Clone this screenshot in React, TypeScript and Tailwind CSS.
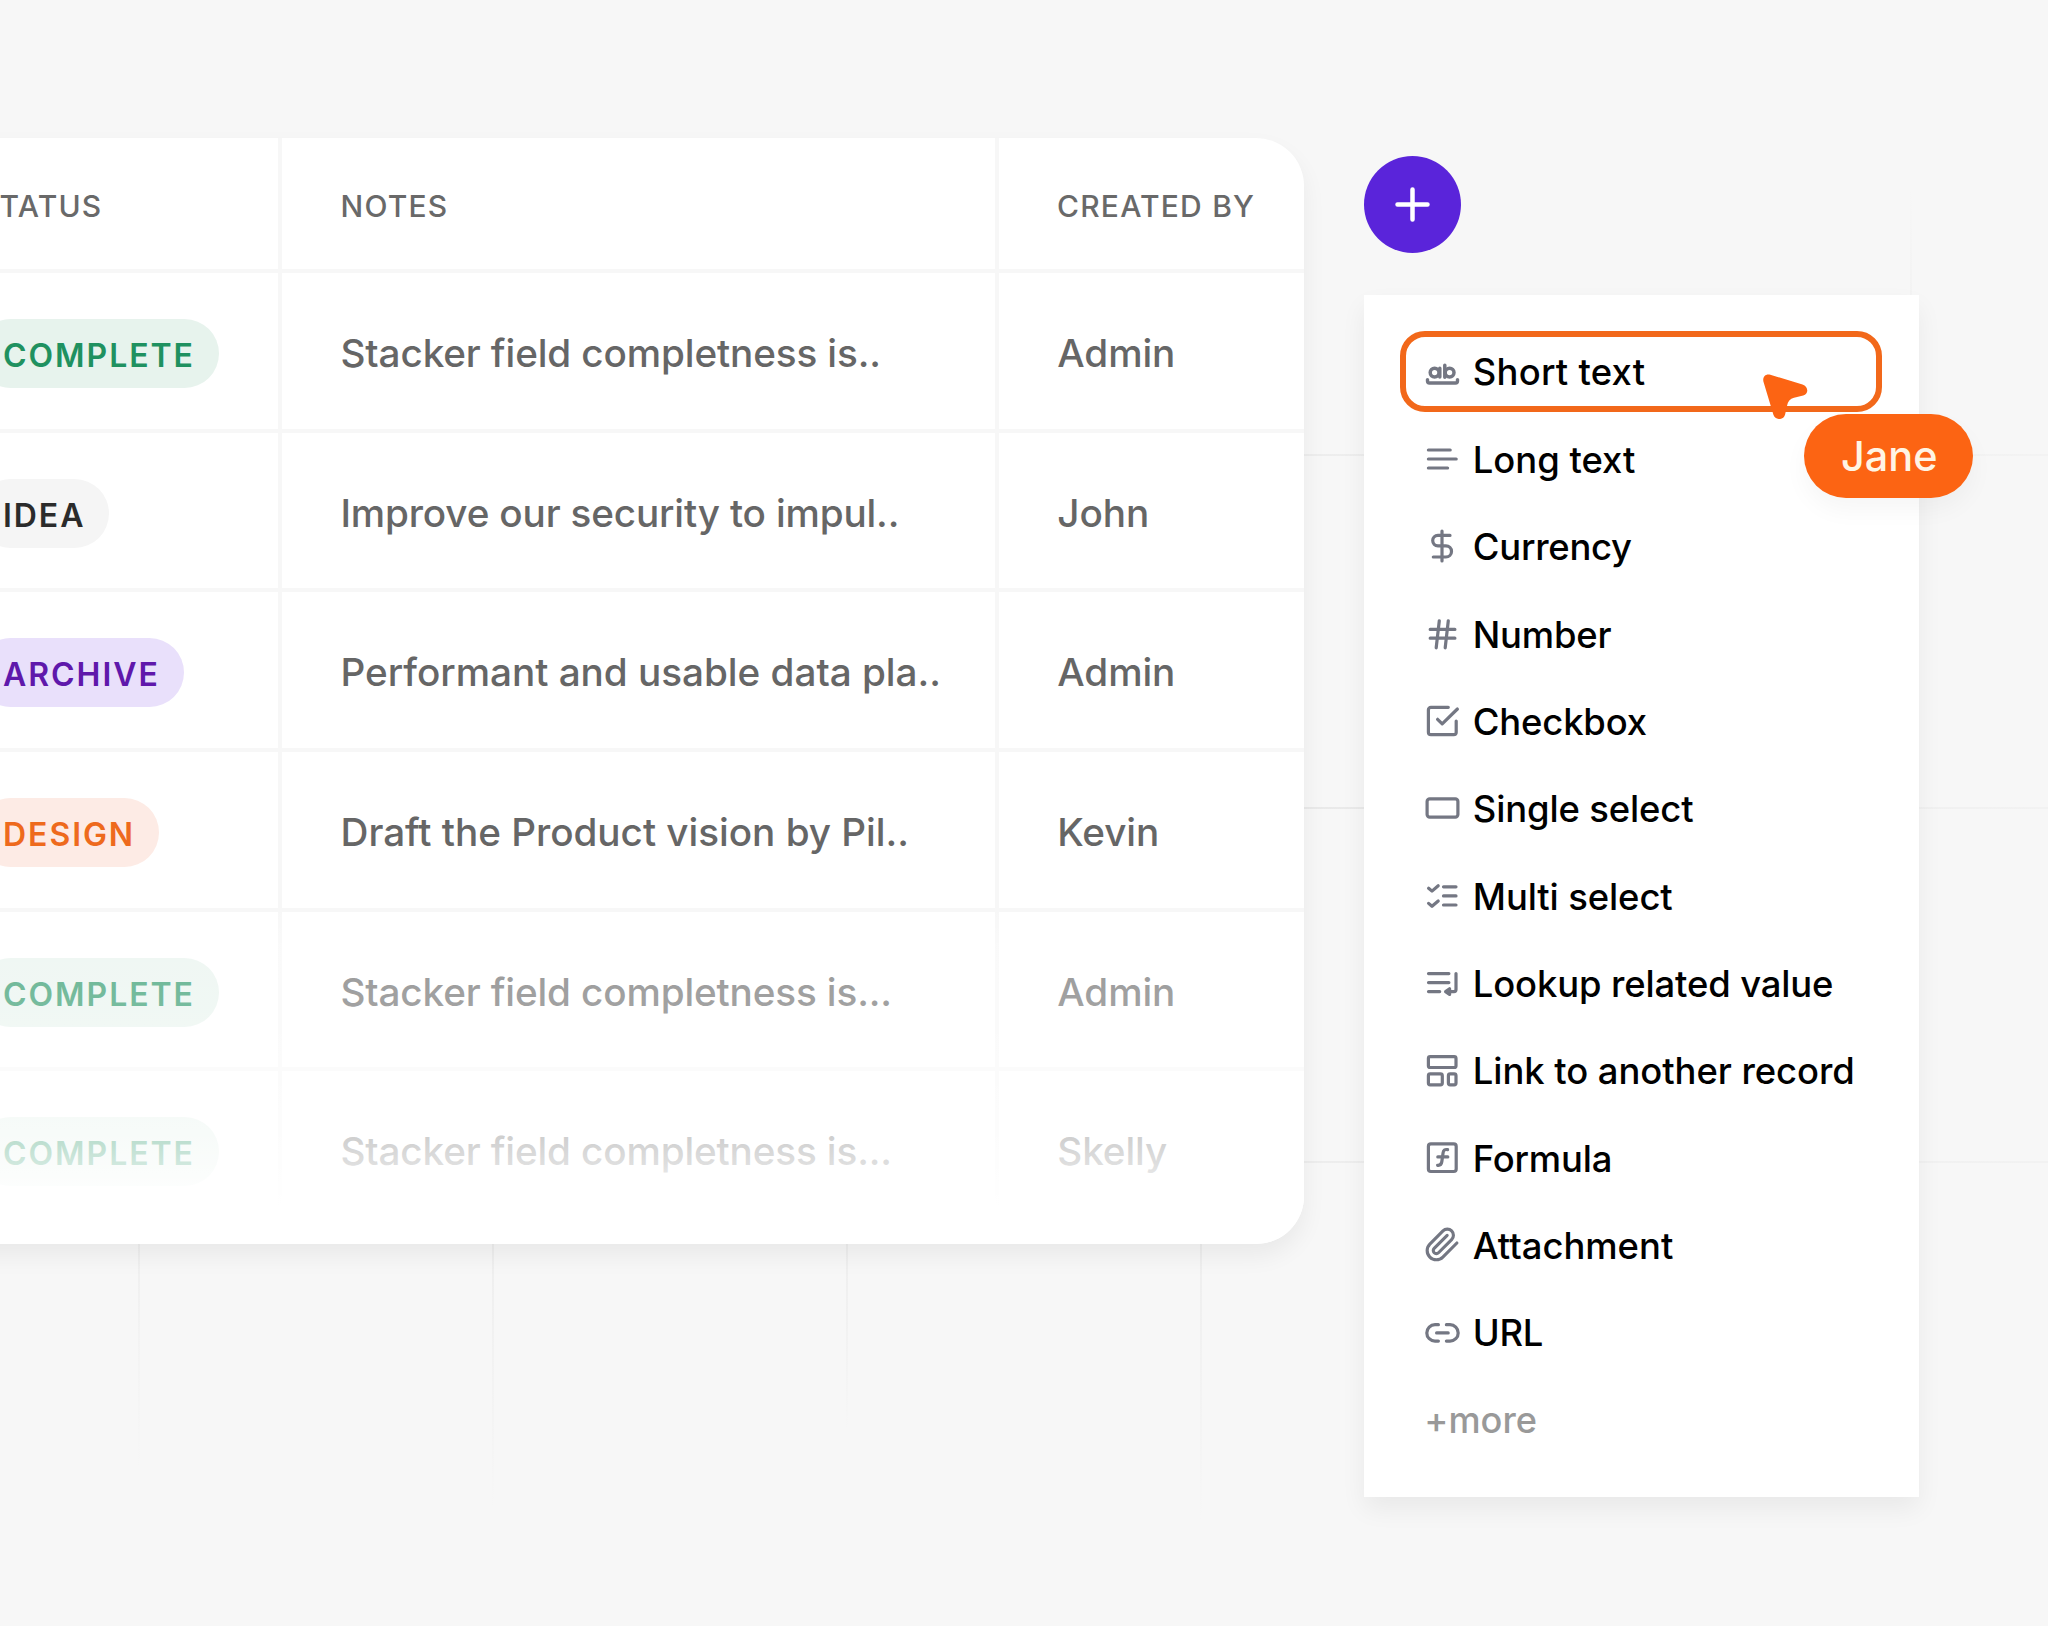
import type { ReactNode } from "react";

type Row = { status: string; pill: string; notes: string; by: string; tracking: string };

const GREEN = "bg-[#e7f3ed] text-[#1f9160]";

const rows: Row[] = [
  { status: "COMPLETE", pill: GREEN, notes: "Stacker field completness is..", by: "Admin", tracking: "tracking-[-0.13px]" },
  { status: "IDEA", pill: "bg-[#f5f5f5] text-[#2b2b2b]", notes: "Improve our security to impul..", by: "John", tracking: "tracking-[-0.17px]" },
  { status: "ARCHIVE", pill: "bg-[#e9e0fb] text-[#5f18ab]", notes: "Performant and usable data pla..", by: "Admin", tracking: "tracking-[-0.03px]" },
  { status: "DESIGN", pill: "bg-[#fdebe5] text-[#ee6a1d]", notes: "Draft the Product vision by Pil..", by: "Kevin", tracking: "tracking-[-0.03px]" },
  { status: "COMPLETE", pill: GREEN, notes: "Stacker field completness is...", by: "Admin", tracking: "tracking-[-0.15px]" },
  { status: "COMPLETE", pill: GREEN, notes: "Stacker field completness is...", by: "Skelly", tracking: "tracking-[-0.15px]" },
];

function Icon({ children }: { children: ReactNode }) {
  return (
    <svg
      viewBox="0 0 36 36"
      className="size-9 shrink-0 text-[#747783]"
      fill="none"
      stroke="currentColor"
      strokeWidth={3.2}
      strokeLinecap="round"
      strokeLinejoin="round"
    >
      {children}
    </svg>
  );
}

const items: { label: string; icon: ReactNode; tracking?: string }[] = [
  {
    label: "Short text",
    tracking: "tracking-[0.25px]",
    icon: (
      <>
        <g strokeWidth={3.5}>
          <ellipse cx="10.6" cy="18.6" rx="4.4" ry="4.4" />
          <path d="M15.8 14.2v8.800M20.800 11.200v12" />
          <circle cx="25.6" cy="18.6" r="4.400" />
        </g>
        <path d="M3.5 25.6v1.4q0 2 2 2h26q2 0 2-2v-1.4" strokeWidth={3.4} />
      </>
    ),
  },
  { label: "Long text", icon: <path d="M4.4 9h21.8M4.4 18h27.8M4.4 27h19.2" /> },
  {
    label: "Currency",
    tracking: "tracking-[-0.25px]",
    icon: <path d="M18 3.1v29.8M26 7.4H13.9a5.2 5.2 0 0 0 0 10.4h8a5.6 5.6 0 0 1 0 11.2H9.3" />,
  },
  {
    label: "Number",
    tracking: "tracking-[-0.2px]",
    icon: <path d="M6.2 13.4h24.7M6.2 22.2h24.7M15.3 4.8l-3.1 27M24.3 4.8l-3.1 27" />,
  },
  {
    label: "Checkbox",
    tracking: "tracking-[-0.15px]",
    icon: (
      <path d="M24.3 4.3H6.9a2.5 2.5 0 0 0-2.5 2.5v22.4a2.5 2.5 0 0 0 2.5 2.5h22.8a2.5 2.5 0 0 0 2.5-2.5V18M13.6 16.3l4.6 4.6L33.4 6" />
    ),
  },
  { label: "Single select", tracking: "tracking-[-0.12px]", icon: <rect x="3.1" y="8.9" width="30.8" height="18.2" rx="2.6" /> },
  {
    label: "Multi select",
    tracking: "tracking-[-0.1px]",
    icon: (
      <path d="M19.5 8.8H32M19.5 17.9H32M19.5 27H32M4.6 10.2l3.4 2.9 6.2-5.3M4.6 25.4l3.4 2.9 6.2-5.3" />
    ),
  },
  {
    label: "Lookup related value",
    tracking: "tracking-[-0.12px]",
    icon: (
      <>
        <path d="M4.5 8.6h20.4M4.5 17.6h20.4M4.5 26.6h11.2M32 8.6v16q0 2-2 2h-5" />
        <path d="M21.6 26.6l4-2.8v5.6z" fill="currentColor" />
      </>
    ),
  },
  {
    label: "Link to another record",
    tracking: "tracking-[-0.05px]",
    icon: (
      <>
        <rect x="4.4" y="3.6" width="27.6" height="10.9" rx="1.8" />
        <rect x="4.4" y="20.9" width="13.9" height="10.9" rx="1.8" />
        <rect x="24.4" y="20.9" width="7.6" height="10.9" rx="1.8" />
      </>
    ),
  },
  {
    label: "Formula",
    tracking: "tracking-[-0.2px]",
    icon: (
      <>
        <rect x="4.4" y="3.9" width="27.8" height="27.6" rx="2.5" />
        <path d="M23.6 9.6c-2.8-.5-4.1.6-4.5 3.2l-1.3 9c-.4 2.7-1.7 3.8-4.2 3.5M13.8 16.9h10" />
      </>
    ),
  },
  {
    label: "Attachment",
    icon: (
      <g transform="translate(0.1 -0.9) scale(1.53)" strokeWidth={2.05}>
        <path d="m21.44 11.05-9.19 9.19a6 6 0 0 1-8.49-8.49l8.57-8.57A4 4 0 1 1 18 8.84l-8.59 8.57a2 2 0 0 1-2.83-2.83l8.49-8.48" />
      </g>
    ),
  },
  {
    label: "URL",
    tracking: "tracking-[-0.3px]",
    icon: (
      <path d="M14.4 9.7H11a8.2 8.2 0 0 0 0 16.4h3.4M22.4 9.7H26a8.2 8.2 0 0 1 0 16.4h-3.6M12.6 17.9h11.6" />
    ),
  },
];

function HeaderCell({ children, className }: { children: ReactNode; className: string }) {
  return (
    <div className={`flex shrink-0 items-center border-[#f7f7f7] pt-[5px] ${className}`}>
      <span className="text-[30px] leading-none tracking-[1.2px] text-[#696969]">{children}</span>
    </div>
  );
}

function Table() {
  return (
    <section className="relative -ml-[84px] mt-[138px] h-[1106px] w-[1388px] shrink-0 overflow-hidden rounded-[48px] bg-white font-medium whitespace-nowrap text-[#666666]">
      <div className="flex h-[135px] border-b-4 border-[#f7f7f7]">
        <HeaderCell className="w-[366px] border-r-4 pl-[63px]">STATUS</HeaderCell>
        <HeaderCell className="w-[717px] border-r-4 pl-[58.5px]">NOTES</HeaderCell>
        <HeaderCell className="w-[305px] pl-[58px]">CREATED BY</HeaderCell>
      </div>
      {rows.map((r, i) => (
        <div key={i} className="flex h-[159.7px] border-b-4 border-[#f7f7f7] text-[38.7px] leading-none last-of-type:border-b-0">
          <div className="flex w-[366px] shrink-0 items-center border-r-4 border-[#f7f7f7] pt-[5px] pl-[60px]">
            <span
              className={`flex h-[69px] items-center rounded-full pr-[24px] pl-[27px] text-[32px] font-semibold tracking-[1.95px] ${r.pill}`}
            >
              <span className="pt-[5px]">{r.status}</span>
            </span>
          </div>
          <div className={`flex w-[717px] shrink-0 items-center border-r-4 border-[#f7f7f7] pt-[5px] pl-[58.5px] ${r.tracking}`}>
            {r.notes}
          </div>
          <div className="flex w-[305px] shrink-0 items-center pt-[5px] pl-[58.3px] tracking-[-0.1px]">{r.by}</div>
        </div>
      ))}
      <div className="absolute inset-x-0 bottom-0 h-[338px] bg-[linear-gradient(to_bottom,rgba(255,255,255,0)_0px,rgba(255,255,255,0.34)_40px,rgba(255,255,255,0.4)_112px,rgba(255,255,255,0.67)_226px,rgba(255,255,255,0.79)_258px,rgba(255,255,255,1)_302px)]" />
    </section>
  );
}

function FieldMenu() {
  return (
    <div className="relative mt-[41.7px] h-[1202.3px] w-[555px] bg-white pt-[33.3px] pl-9 shadow-[0_12px_24px_rgba(0,0,0,0.06)]">
      <ul className="font-medium whitespace-nowrap text-black">
        {items.map((it, i) => (
          <li key={it.label} className="flex h-[87.37px] items-center">
            <div
              className={`flex h-[81px] w-[482px] items-center gap-[12.5px] rounded-[25px] border-6 pl-[18.3px] ${
                i === 0 ? "border-[#f2681a]" : "border-transparent"
              }`}
            >
              <Icon>{it.icon}</Icon>
              <span className={`pt-[2px] text-[36.4px] leading-none ${it.tracking ?? ""}`}>{it.label}</span>
            </div>
          </li>
        ))}
        <li className="flex h-[87.37px] items-center pl-[24.3px] pt-[1px] text-[36.2px] leading-none text-[#999999]">+more</li>
      </ul>

      <div className="absolute top-[119px] left-[439.8px] flex h-[84px] w-[169px] items-center justify-center rounded-full bg-[#fc6413] pt-[2px] pl-[2px] text-[41.4px] leading-none font-medium text-[#fff4e4] shadow-[0_12px_24px_rgba(0,0,0,0.04)]">
        Jane
      </div>
      <svg viewBox="0 0 45 45" className="absolute top-[79.4px] left-[399px] size-[45px]" fill="#fc6413">
        <path d="M.4 7.5C-.6 2.5 2.8-.6 7.3.7l32.2 9.8c6 2 6.500 9.300.7 10.900L31 23.700c-4 1.100-6.200 3.800-6.900 7.800l-2 9c-1.300 6-9.800 6-11.700.3z" />
      </svg>
    </div>
  );
}

/** Faint guide lines behind the cards, fading out toward their ends. */
function GridLines() {
  return (
    <div className="absolute inset-0">
      <div className="absolute top-[1200px] left-[138px] h-[270px] w-[2px] bg-linear-to-b from-[#ececec] via-[#f3f3f3] to-[#f7f7f7]" />
      <div className="absolute top-[1200px] left-[492px] h-[310px] w-[2px] bg-linear-to-b from-[#ececec] via-[#f2f2f2] to-[#f7f7f7]" />
      <div className="absolute top-[1200px] left-[846px] h-[230px] w-[2px] bg-linear-to-b from-[#ececec] via-[#f1f1f1] to-[#f7f7f7]" />
      <div className="absolute top-[1200px] left-[1200px] h-[320px] w-[2px] bg-linear-to-b from-[#ececec] via-[#f2f2f2] to-[#f7f7f7]" />
      <div className="absolute top-[190px] left-[1910px] h-[140px] w-[2px] bg-linear-to-b from-[#f7f7f7] to-[#f2f2f2]" />
      <div className="absolute top-[454px] left-[1290px] h-[2px] w-[758px] bg-linear-to-r from-[#ededed] to-[#f3f3f3]" />
      <div className="absolute top-[807px] left-[1290px] h-[2px] w-[758px] bg-linear-to-r from-[#e9e9e9] to-[#f2f2f2]" />
      <div className="absolute top-[1161px] left-[1290px] h-[2px] w-[758px] bg-linear-to-r from-[#ededed] to-[#f2f2f2]" />
    </div>
  );
}

export default function App() {
  return (
    <main className="relative h-[1626px] w-[2048px] overflow-hidden bg-[#f7f7f7] font-['Inter',sans-serif]">
      <GridLines />
      <div className="relative flex">
        <div className="h-[1244px] shrink-0">
          <div className="relative">
            <div className="absolute top-0 right-0 h-[1106px] w-[1388px] rounded-[48px] shadow-[0_12px_24px_rgba(0,0,0,0.06)]" />
            <Table />
          </div>
        </div>
        <div className="ml-[60px] pt-[156px]">
          <button className="flex size-[97px] items-center justify-center rounded-full bg-[#5a24da]">
            <svg viewBox="0 0 35 35" className="size-[35px]" fill="none" stroke="white" strokeWidth={4.5} strokeLinecap="round">
              <path d="M17.500 2.500v30M2.500 17.500h30" />
            </svg>
          </button>
          <FieldMenu />
        </div>
      </div>
    </main>
  );
}
